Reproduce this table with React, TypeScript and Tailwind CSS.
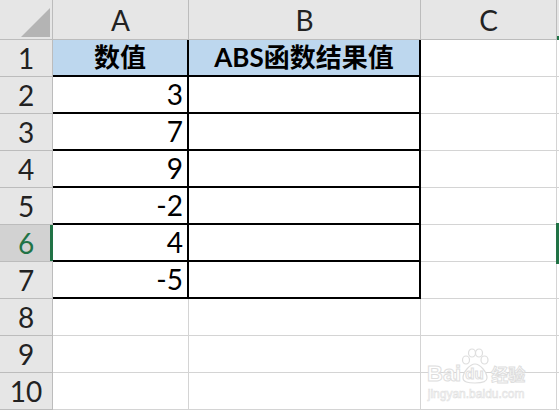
import React from "react"

const cols = ["A", "B", "C"]
const colWidths = ["w-[136px]", "w-[232px]", "w-[136px]"]

const rows: { n: number; a?: string; b?: string }[] = [
    { n: 1, a: "数值", b: "ABS函数结果值" },
    { n: 2, a: "3", b: "" },
    { n: 3, a: "7", b: "" },
    { n: 4, a: "9", b: "" },
    { n: 5, a: "-2", b: "" },
    { n: 6, a: "4", b: "" },
    { n: 7, a: "-5", b: "" },
    { n: 8 },
    { n: 9 },
    { n: 10 },
]

const font = "font-['Lato','Noto_Sans_CJK_SC',sans-serif]"

// faint baidu jingyan watermark over the bottom right cells
const Watermark = () => (
    <div className="absolute left-[427px] top-[348px] flex flex-col items-center whitespace-nowrap pointer-events-none select-none">
        <div className="flex items-end leading-none h-[36px] shrink-0">
            <span className="block h-[20px] text-[22px] font-bold font-['Liberation_Sans',sans-serif] [-webkit-text-stroke:1px_#dedede] text-white leading-[20px]">Bai</span>
            <div className="relative w-[28px] h-[36px] shrink-0">
                <svg width="28" height="36" viewBox="0 0 28 36" className="absolute left-0 top-0">
                    <g fill="white" stroke="#dedede" strokeWidth="1.2">
                        <ellipse cx="5" cy="12" rx="3.5" ry="4" />
                        <ellipse cx="11" cy="5" rx="3.5" ry="4" />
                        <ellipse cx="18" cy="5" rx="3.5" ry="4" />
                        <ellipse cx="23.5" cy="12" rx="3.5" ry="4" />
                        <path d="M14 16c5 0 12 8 12 14 0 4-5 5-12 5s-12-1-12-5c0-6 7-14 12-14z" />
                    </g>
                </svg>
                <span className="absolute left-[4px] bottom-[3px] text-[15px] font-bold font-['Liberation_Sans',sans-serif] [-webkit-text-stroke:1px_#dedede] text-white leading-[15px]">du</span>
            </div>
            <span className="block h-[20px] text-[17px] font-bold font-['Noto_Sans_CJK_SC',sans-serif] [-webkit-text-stroke:1px_#dedede] text-white ml-[2px] leading-[20px]">经验</span>
        </div>
        <span className="text-[12px] leading-[13px] font-['Liberation_Sans',sans-serif] [-webkit-text-stroke:0.6px_#e0e0e0] text-white mt-[4px]">jingyan.baidu.com</span>
    </div>
)

export default function App() {
    return (
        <div className={`relative w-[559px] h-[410px] overflow-hidden bg-white text-black ${font}`}>
            {/* column header row */}
            <div className="flex h-[40px] bg-[#e6e6e6]">
                <div className="relative w-[53px] h-full border-r border-b border-[#bcbcbc] shrink-0">
                    <svg width="30" height="30" viewBox="0 0 30 30" className="absolute left-[21px] top-[8px]">
                        <polygon points="29,0 29,29 0,29" fill="#b4b4b4" />
                    </svg>
                </div>
                {cols.map((c, i) => (
                    <div
                        key={c}
                        className={`${colWidths[i]} shrink-0 h-full border-r border-b border-[#bcbcbc] flex items-end justify-center pb-[2px] text-[28px] leading-[34px] text-[#222]`}
                    >
                        {c}
                    </div>
                ))}
                <div className="relative flex-1 border-b border-[#bcbcbc]">
                    <div className="absolute right-0 bottom-[-1px] w-[2px] h-[4px] bg-[#217346]" />
                </div>
            </div>

            {rows.map((r) => {
                const inTable = r.n <= 7
                const isHead = r.n === 1
                const cellBorder = inTable ? "border-r-2 border-b-2 border-black" : "border-r border-b border-[#d4d4d4]"
                const selected = r.n === 6
                return (
                    <div key={r.n} className="flex h-[37px]">
                        <div
                            className={`relative w-[53px] shrink-0 border-r border-b border-[#bcbcbc] flex items-end justify-center pb-[1px] text-[28px] leading-[34px] ${
                                selected ? "bg-[#d2d2d2] text-[#217346]" : "bg-[#e6e6e6] text-[#222]"
                            }`}
                        >
                            {r.n}
                            {selected && <div className="absolute right-[-1px] top-0 h-full w-[3px] bg-[#217346]" />}
                        </div>
                        <div
                            className={`w-[136px] shrink-0 ${cellBorder} ${isHead ? "bg-[#bdd7ee] justify-center font-bold text-[26px]" : "justify-end pr-[4px] text-[28px]"} flex items-end pb-[1px] leading-[34px]`}
                        >
                            {r.a}
                        </div>
                        <div
                            className={`w-[232px] shrink-0 ${cellBorder} ${isHead ? "bg-[#bdd7ee] justify-center font-bold text-[26px]" : ""} flex items-end pb-[1px] leading-[34px]`}
                        >
                            {r.b}
                        </div>
                        <div className="w-[136px] shrink-0 border-r border-b border-[#d4d4d4]" />
                        <div className="relative flex-1 border-b border-[#d4d4d4]">
                            {selected && <div className="absolute right-0 top-[-2px] h-[41px] w-[3px] bg-[#217346]" />}
                        </div>
                    </div>
                )
            })}

            <Watermark />
        </div>
    )
}
